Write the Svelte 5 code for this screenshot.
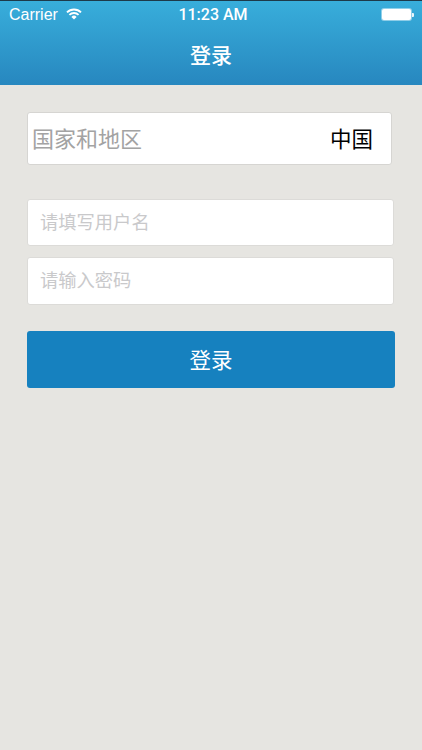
<script>
	let username = $state('');
	let password = $state('');
</script>

<div class="page">
	<header class="top">
		<div class="status">
			<div class="carrier">
				<span>Carrier</span>
				<svg viewBox="0 0 16 12" width="16" height="12">
					<g fill="none" stroke="#fff" stroke-width="1.9">
						<path d="M1 4.4a10 10 0 0 1 14 0" />
						<path d="M3.4 6.9a6.6 6.6 0 0 1 9.2 0" />
					</g>
					<path d="M5.4 8.9a3.7 3.7 0 0 1 5.2 0L8 11.6z" fill="#fff" />
				</svg>
			</div>
			<div class="time">11:23 AM</div>
			<div class="battery">
				<span class="cell"></span>
				<span class="nub"></span>
			</div>
		</div>
		<h1>登录</h1>
	</header>

	<main class="form">
		<div class="region">
			<span class="region-label">国家和地区</span>
			<span class="region-value">中国</span>
		</div>
		<input class="field first" type="text" placeholder="请填写用户名" bind:value={username} />
		<input class="field second" type="password" placeholder="请输入密码" bind:value={password} />
		<button class="submit" type="button">登录</button>
	</main>
</div>

<style>
	:global(body) {
		background: #e6e5e1;
	}

	.page {
		min-height: 750px;
		background: #e6e5e1;
		font-family: "Liberation Sans", "Noto Sans CJK SC", sans-serif;
	}

	.top {
		height: 85px;
		box-sizing: border-box;
		border-top: 1px solid #1d3a4a;
		background: linear-gradient(#38aedb, #2787bf);
		color: #fff;
	}

	.status {
		height: 27px;
		padding: 0 8px 0 9px;
		display: grid;
		grid-template-columns: 1fr auto 1fr;
		align-items: center;
		font-size: 16px;
	}

	.carrier {
		display: flex;
		align-items: center;
		gap: 8px;
	}

	.carrier svg {
		margin-bottom: 2px;
	}

	.time {
		margin-left: 3px;
		font-weight: 500;
		font-family: "Roboto", "Liberation Sans", sans-serif;
	}

	.battery {
		justify-self: end;
		display: flex;
		align-items: center;
	}

	.cell {
		width: 29px;
		height: 11px;
		background: #fff;
		border-radius: 2px;
		box-shadow: 0 0 0 1px rgba(255, 255, 255, 0.45);
	}

	.nub {
		width: 2px;
		height: 4px;
		margin-left: 1px;
		background: #e8f5fb;
		border-radius: 0 1px 1px 0;
	}

	h1 {
		margin: 0;
		padding-top: 1px;
		text-align: center;
		font-size: 21px;
		font-weight: 500;
		line-height: 54px;
	}

	.form {
		padding: 27px 27px 0;
		display: flex;
		flex-direction: column;
		align-items: flex-start;
	}

	.region {
		width: 365px;
		height: 53px;
		box-sizing: border-box;
		padding: 0 18px 3px 4px;
		display: flex;
		justify-content: space-between;
		align-items: center;
		background: #fff;
		border: 1px solid #d6d5d2;
		border-radius: 3px;
	}

	.region-label {
		color: #a3a3a3;
		font-size: 22px;
	}

	.region-value {
		color: #000;
		font-size: 21.5px;
	}

	.field {
		width: 366.5px;
		box-sizing: border-box;
		padding: 0 12px;
		background: #fff;
		border: 1px solid #dcdbd8;
		border-radius: 3px;
		font-family: inherit;
		font-size: 18.3px;
		outline: none;
	}

	.field::placeholder {
		color: #c9c9cb;
		opacity: 1;
	}

	.first {
		height: 47px;
		margin-top: 34px;
	}

	.second {
		height: 48px;
		margin-top: 11px;
	}

	.submit {
		width: 368px;
		height: 57px;
		margin-top: 26px;
		padding: 0 0 3px;
		background: #1681bf;
		border: 0;
		border-radius: 3px;
		color: #fff;
		font-family: inherit;
		font-size: 21.5px;
	}
</style>
